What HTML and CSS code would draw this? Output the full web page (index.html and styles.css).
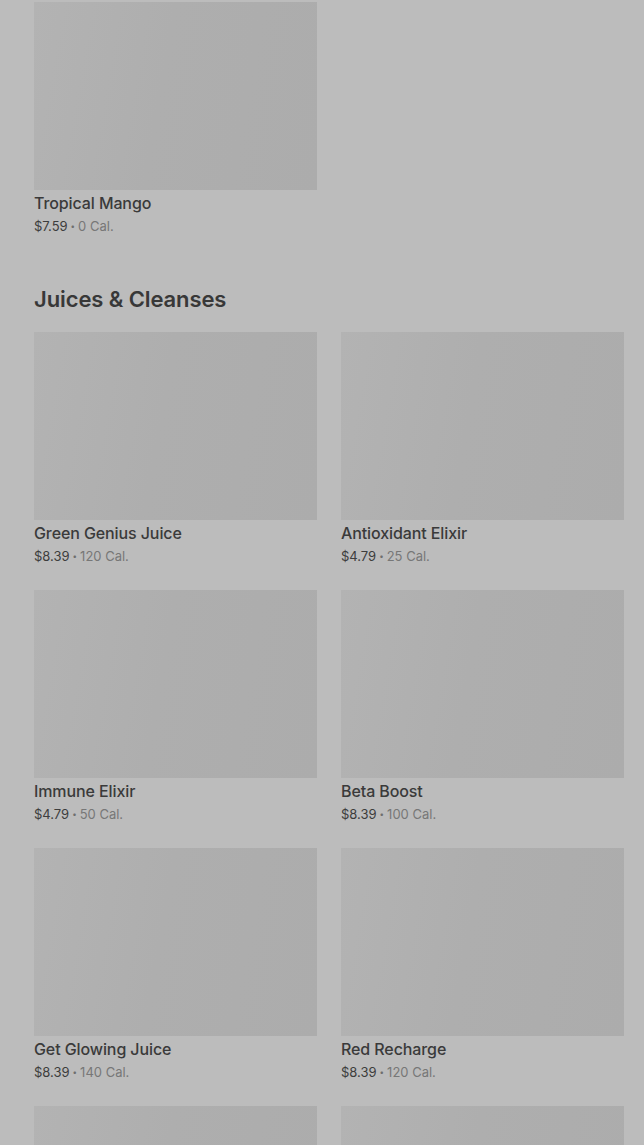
FILE: index.html
```html
<!DOCTYPE html>
<html>
<head>
<meta charset="utf-8">
<link rel="stylesheet" href="styles.css">
</head>
<body>
<main class="page">
  <section class="section">
    <div class="grid">
      <div class="card">
        <div class="thumb"></div>
        <div class="name">Tropical Mango</div>
        <div class="meta"><span class="price">$7.59</span><span class="dot">•</span><span class="cal">0 Cal.</span></div>
      </div>
    </div>
  </section>
  <section class="section">
    <h2 class="heading">Juices &amp; Cleanses</h2>
    <div class="grid">
      <div class="card">
        <div class="thumb"></div>
        <div class="name">Green Genius Juice</div>
        <div class="meta"><span class="price">$8.39</span><span class="dot">•</span><span class="cal">120 Cal.</span></div>
      </div>
      <div class="card">
        <div class="thumb"></div>
        <div class="name">Antioxidant Elixir</div>
        <div class="meta"><span class="price">$4.79</span><span class="dot">•</span><span class="cal">25 Cal.</span></div>
      </div>
      <div class="card">
        <div class="thumb"></div>
        <div class="name">Immune Elixir</div>
        <div class="meta"><span class="price">$4.79</span><span class="dot">•</span><span class="cal">50 Cal.</span></div>
      </div>
      <div class="card">
        <div class="thumb"></div>
        <div class="name">Beta Boost</div>
        <div class="meta"><span class="price">$8.39</span><span class="dot">•</span><span class="cal">100 Cal.</span></div>
      </div>
      <div class="card">
        <div class="thumb"></div>
        <div class="name">Get Glowing Juice</div>
        <div class="meta"><span class="price">$8.39</span><span class="dot">•</span><span class="cal">140 Cal.</span></div>
      </div>
      <div class="card">
        <div class="thumb"></div>
        <div class="name">Red Recharge</div>
        <div class="meta"><span class="price">$8.39</span><span class="dot">•</span><span class="cal">120 Cal.</span></div>
      </div>
      <div class="card">
        <div class="thumb"></div>
      </div>
      <div class="card">
        <div class="thumb"></div>
      </div>
    </div>
  </section>
</main>
</body>
</html>
```
FILE: styles.css
```css
html, body {
  margin: 0;
  padding: 0;
  background: #bcbcbc;
  overflow: hidden;
}
body {
  font-family: Inter, "Noto Sans", sans-serif;
  color: #3a3a3a;
}
.page {
  padding: 2px 20px 0 34px;
}
.grid {
  display: grid;
  grid-template-columns: 283px 283px;
  column-gap: 24px;
  row-gap: 24px;
}
.section + .section {
  margin-top: 49px;
}
.heading {
  margin: 0 0 19px 0;
  font-size: 22px;
  line-height: 28px;
  font-weight: 600;
  letter-spacing: -0.1px;
  color: #383838;
}
.thumb {
  height: 188px;
  background: linear-gradient(100deg, #b3b3b3 0%, #aeaeae 45%, #acacac 100%);
}
.name {
  margin-top: 3px;
  font-size: 16px;
  line-height: 20px;
  font-weight: 500;
  letter-spacing: -0.1px;
  color: #3a3a3a;
}
.meta {
  margin-top: 3px;
  font-size: 13px;
  line-height: 20px;
  display: flex;
  align-items: center;
}
.price {
  color: #3d3d3d;
}
.dot {
  color: #6e6e6e;
  font-size: 8px;
  margin: 0 3px;
}
.cal {
  color: #777777;
}
```
